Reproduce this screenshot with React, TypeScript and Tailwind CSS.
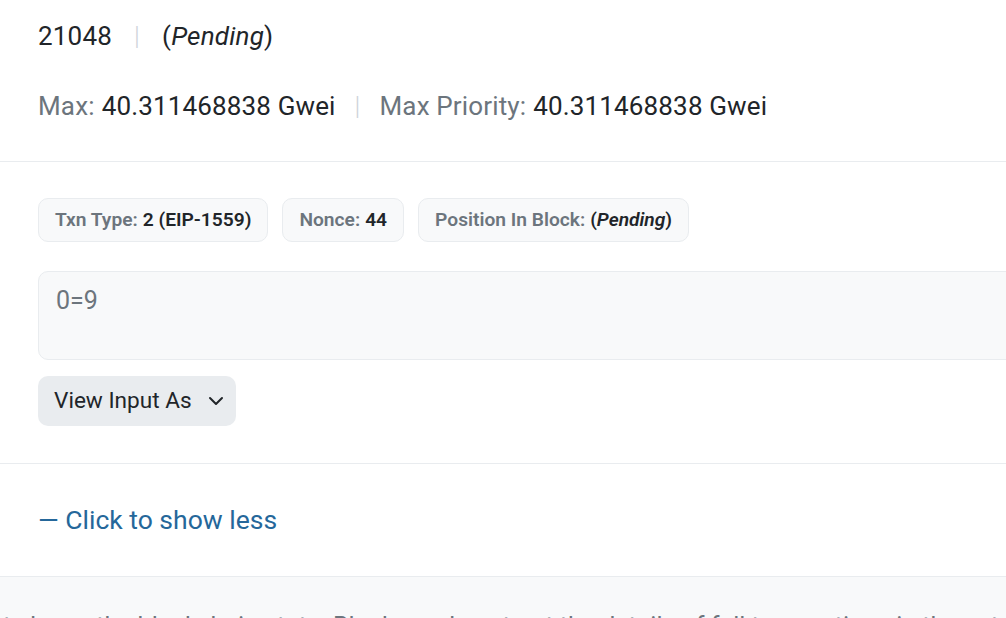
import { ChevronDown } from "lucide-react";

const Chip = ({ label, children }: { label: string; children: React.ReactNode }) => (
  <div className="h-[44px] flex items-center px-[16px] rounded-[10px] bg-[#f8f9fa] border border-[#e9ecef] text-[19.2px] font-semibold whitespace-nowrap">
    <span className="text-[#6c757d]">{label}</span>
    <span className="text-[#212529] ml-[5px]">{children}</span>
  </div>
);

export default function App() {
  return (
    <div className="w-full h-[618px] overflow-hidden bg-white text-[#212529]" style={{ fontFamily: "Roboto, 'Liberation Sans', sans-serif" }}>
      <div className="w-[1200px]">
        {/* gas */}
        <div className="px-[38px] pb-[21px] border-b border-[#e9ecef]">
          <div className="h-[72px] flex items-center text-[26px] tracking-[0.2px]">
            <span>21048</span>
            <span className="mx-[22px] text-[#ced4da] font-light">|</span>
            <span>(<i>Pending</i>)</span>
          </div>
          <div className="h-[68px] flex items-center text-[26px] tracking-[0.15px] whitespace-nowrap">
            <span className="text-[#6c757d]">Max:</span>
            <span className="ml-[7px]">40.311468838 Gwei</span>
            <span className="mx-[19px] text-[#ced4da] font-light">|</span>
            <span className="text-[#6c757d]">Max Priority:</span>
            <span className="ml-[7px]">40.311468838 Gwei</span>
          </div>
        </div>

        {/* other attributes */}
        <div className="px-[38px] pt-[36px] pb-[37px] border-b border-[#e9ecef]">
          <div className="flex gap-[14px]">
            <Chip label="Txn Type:">2 (EIP-1559)</Chip>
            <Chip label="Nonce:">44</Chip>
            <Chip label="Position In Block:">(<i>Pending</i>)</Chip>
          </div>
          <div className="mt-[29px] h-[89px] rounded-[10px] bg-[#f8f9fa] border border-[#e9ecef] px-[17px] pt-[10px] text-[25px] text-[#6c757d]">
            0=9
          </div>
          <button className="mt-[16px] h-[50px] pl-[16px] pr-[8px] rounded-[10px] bg-[#e9ecef] flex items-center gap-[12px] text-[22.6px] text-[#212529]">
            View Input As
            <ChevronDown size={24} strokeWidth={2} />
          </button>
        </div>

        {/* toggle */}
        <div className="h-[112px] px-[38px] flex items-center">
          <span className="text-[26.5px] text-[#25679a]">— Click to show less</span>
        </div>

        {/* footer note */}
        <div className="h-[60px] bg-[#f8f9fa] border-t border-[#e9ecef] pl-[3px] pt-[31px] whitespace-nowrap text-[25px] text-[#6c757d]">
          t shows the blockchain state. Blocks and contract the details of full transactions in the network and it
        </div>
      </div>
    </div>
  );
}
